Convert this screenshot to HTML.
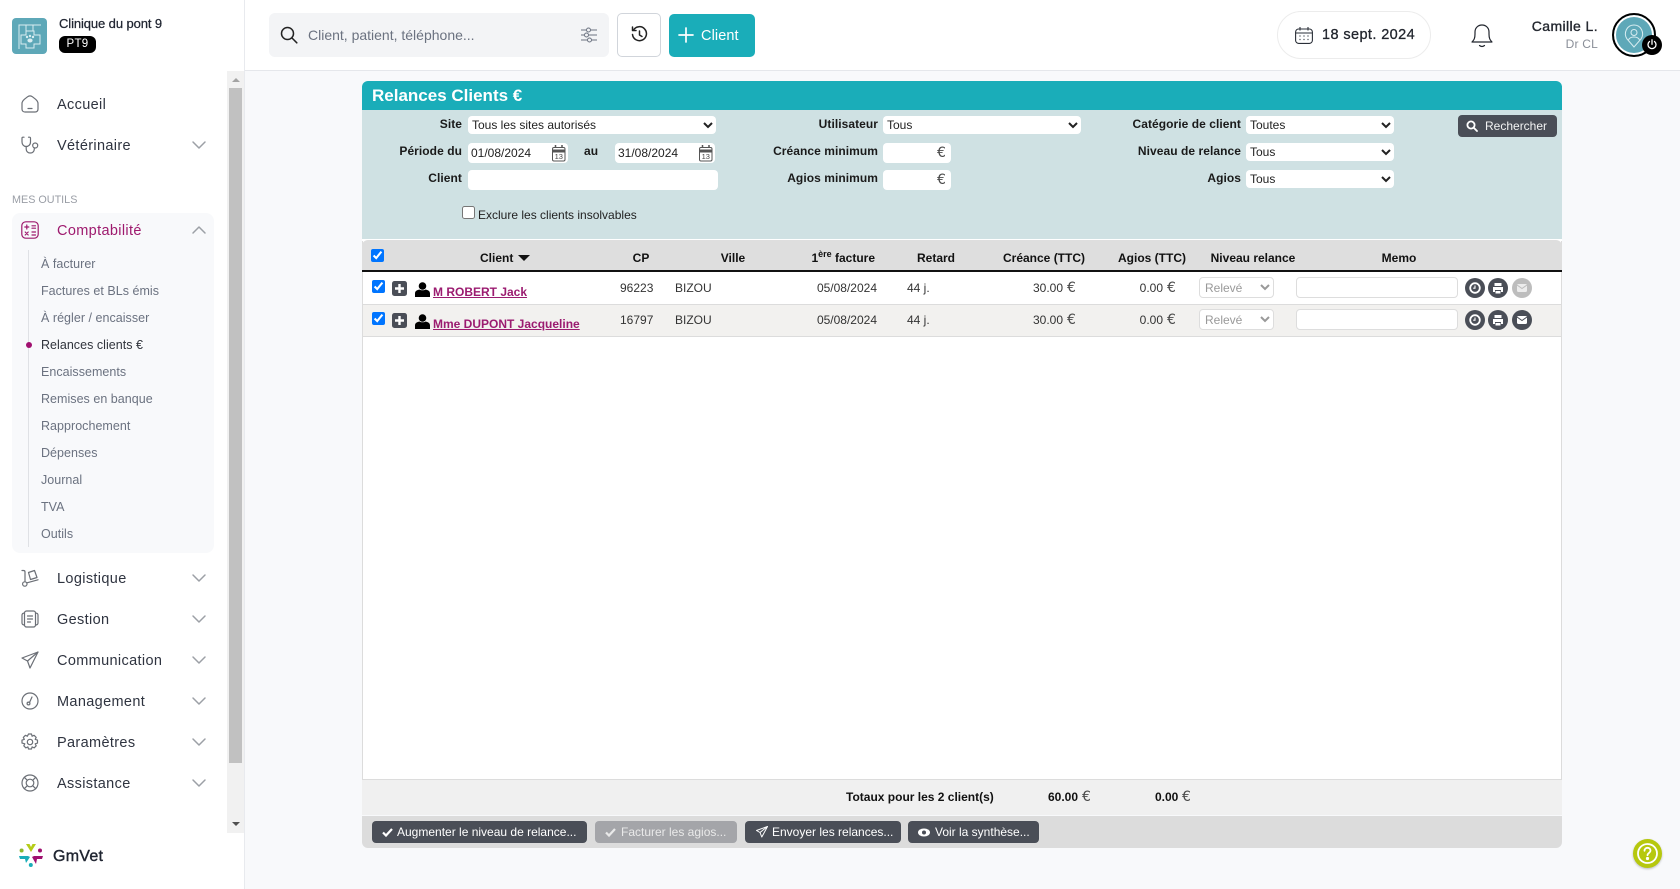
<!DOCTYPE html>
<html lang="fr"><head><meta charset="utf-8"><title>Relances Clients</title>
<style>
*{box-sizing:border-box}
html,body{margin:0;padding:0;width:1680px;height:889px;overflow:hidden;background:#f8f9fb;font-family:"Liberation Sans",Arial,sans-serif;color:#000}
.a,.t,.r,.c{position:absolute}
.t,.r,.c{white-space:nowrap;line-height:16px;font-size:12px}
.r{text-align:right;transform:translateX(-100%)}
.c{transform:translateX(-50%)}
.m{font-size:14.5px;letter-spacing:.35px;color:#2f3440;left:57px}
.s{font-size:12.5px;letter-spacing:.03px;color:#6b7280;left:41px}
.l{font-weight:bold;color:#1a1a1a;letter-spacing:.06px}
.h{font-weight:bold;color:#111}
.d{color:#333}
svg{position:absolute;display:block;overflow:visible}
.i{fill:none;stroke:#6b6f76;stroke-width:1.2;stroke-linecap:round;stroke-linejoin:round}
.cv{fill:none;stroke:#9ca0a6;stroke-width:1.5;stroke-linecap:round;stroke-linejoin:round}
select,input[type=text]{position:absolute;margin:0;border:0;background:#fff;border-radius:4px;font:12px "Liberation Sans",Arial,sans-serif;color:#222;outline:0}
select{padding:0}
input[type=text]{padding:0 3px}
input[type=checkbox]{position:absolute;margin:0;width:13px;height:13px}
.e{font-family:"DejaVu Sans",sans-serif;font-size:14px;color:#4a4a4a;font-weight:normal}
.b{position:absolute;top:821px;height:22px;background:#4a4e57;border-radius:4px;color:#fff;font-size:12px;line-height:22px;white-space:nowrap}
.ci{position:absolute;width:20px;height:20px;border-radius:50%;background:#4a4e57}
.lnk{position:absolute;left:433px;font-size:12px;line-height:14px;font-weight:bold;color:#9b1b70;text-decoration:underline;white-space:nowrap}
</style></head><body>

<!-- Sidebar -->
<div class="a" style="left:0;top:0;width:245px;height:889px;background:#fff;border-right:1px solid #e8eaee"></div>
<div class="a" style="left:12px;top:18px;width:35px;height:36px;border-radius:4px;background:#5ea8b8"></div>
<svg style="left:12px;top:18px" width="35" height="36" viewBox="0 0 35 36"><g fill="none" stroke="#d8edf1" stroke-width="1"><path d="M7 31V7h22M14 7v6M21 7v6"/><path d="M14 13h8v4h6v9h-6v4h-8v-4H9v-9h5z"/></g><g fill="#d8edf1"><circle cx="15" cy="19" r="1.2"/><circle cx="18" cy="18" r="1.2"/><circle cx="21" cy="19" r="1.2"/><ellipse cx="18" cy="22.500" rx="2.600" ry="2"/></g></svg>
<div class="t" style="left:59px;top:16px;font-size:13px;letter-spacing:-.1px;color:#1f2430;-webkit-text-stroke:.25px #1f2430">Clinique du pont 9</div>
<div class="a" style="left:59px;top:36px;width:37px;height:17px;background:#000;border-radius:6px;color:#fff;font-size:11.5px;line-height:17px;text-align:center;letter-spacing:.3px">PT9</div>

<!-- Scrollbar -->
<div class="a" style="left:227px;top:71px;width:17px;height:762px;background:#f1f1f1"></div>
<div class="a" style="left:229px;top:88px;width:13px;height:675px;background:#c1c1c1"></div>
<svg style="left:232px;top:77px" width="9" height="6"><path d="M4 1l4 4H0z" fill="#a3a3a3"/></svg>
<svg style="left:232px;top:821px" width="9" height="6"><path d="M0 1h8L4 5z" fill="#505050"/></svg>

<!-- Menu -->
<svg class="i" style="left:21px;top:95px" width="18" height="18" viewBox="0 0 18 18"><path d="M1 8.500C1 6.500 2 5.500 3.500 4.200L6.500 1.800C8 .7 10 .7 11.500 1.800L14.500 4.200C16 5.500 17 6.500 17 8.500V14C17 16 15.800 17 14 17H4C2.200 17 1 16 1 14z"/><path d="M7 13.500h4"/></svg>
<div class="t m" style="top:97px">Accueil</div>
<svg class="i" style="left:21px;top:136px" width="18" height="18" viewBox="0 0 18 18"><path d="M3 1.200H2C1.400 1.200 1 1.600 1 2.200V6C1 8.800 3 10.500 5.200 10.500S9.500 8.800 9.500 6V2.200C9.500 1.600 9 1.200 8.500 1.200H7.500"/><path d="M5.200 10.500V13C5.200 15.400 7 17 9.300 17S13.300 15.400 13.300 13V12"/><circle cx="14.200" cy="9.500" r="2.500"/></svg>
<div class="t m" style="top:138px">Vétérinaire</div>
<svg class="cv" style="left:192px;top:141px" width="14" height="8"><path d="M1 1l6 6 6-6"/></svg>
<div class="t" style="left:12px;top:192px;font-size:10.8px;color:#9a9ea6">MES OUTILS</div>

<div class="a" style="left:12px;top:213px;width:202px;height:340px;border-radius:8px;background:#f8f9fb"></div>
<svg class="i" style="left:21px;top:221px;stroke:#9e1a6e" width="18" height="18" viewBox="0 0 18 18"><rect x=".8" y=".8" width="16.400" height="16.400" rx="4"/><path d="M3.800 6h4M5.800 4v4M11 4.800h3.500M11 7.200h3.500M4.200 11l3 3M7.200 11l-3 3M11 11h3.500M11 14h3.500"/></svg>
<div class="t m" style="top:223px;color:#9e1a6e">Comptabilité</div>
<svg class="cv" style="left:192px;top:226px" width="14" height="8"><path d="M1 7l6-6 6 6"/></svg>
<div class="a" style="left:28px;top:250px;width:1px;height:297px;background:#dfe1e5"></div>
<div class="t s" style="top:256px">À facturer</div>
<div class="t s" style="top:283px">Factures et BLs émis</div>
<div class="t s" style="top:310px">À régler / encaisser</div>
<div class="a" style="left:26px;top:342px;width:6px;height:6px;border-radius:50%;background:#a0106f"></div>
<div class="t s" style="top:337px;color:#30343c">Relances clients €</div>
<div class="t s" style="top:364px">Encaissements</div>
<div class="t s" style="top:391px">Remises en banque</div>
<div class="t s" style="top:418px">Rapprochement</div>
<div class="t s" style="top:445px">Dépenses</div>
<div class="t s" style="top:472px">Journal</div>
<div class="t s" style="top:499px">TVA</div>
<div class="t s" style="top:526px">Outils</div>

<svg class="i" style="left:21px;top:569px" width="18" height="18" viewBox="0 0 18 18"><path d="M1 1.500h1.500C3.500 1.500 4 2 4 3V12"/><circle cx="3.800" cy="15" r="2.200"/><path d="M6 13.800L17 10.800"/><path d="M7.500 3.500L13.500 1.500 16 8.500 9.500 10.500z"/></svg>
<div class="t m" style="top:571px">Logistique</div>
<svg class="cv" style="left:192px;top:574px" width="14" height="8"><path d="M1 1l6 6 6-6"/></svg>
<svg class="i" style="left:21px;top:610px" width="18" height="18" viewBox="0 0 18 18"><rect x="3.500" y="1" width="11" height="16" rx="2"/><path d="M3.500 3C1.800 3 1 4 1 5V13C1 14 1.800 15 3.500 15M14.500 3C16.200 3 17 4 17 5V13C17 14 16.200 15 14.500 15M6.500 6h5M6.500 9h5M6.500 12h3"/></svg>
<div class="t m" style="top:612px">Gestion</div>
<svg class="cv" style="left:192px;top:615px" width="14" height="8"><path d="M1 1l6 6 6-6"/></svg>
<svg class="i" style="left:21px;top:651px" width="18" height="18" viewBox="0 0 18 18"><path d="M17 1L1 7l5.500 3L9 17z"/><path d="M17 1L6.500 10"/></svg>
<div class="t m" style="top:653px">Communication</div>
<svg class="cv" style="left:192px;top:656px" width="14" height="8"><path d="M1 1l6 6 6-6"/></svg>
<svg class="i" style="left:21px;top:692px" width="18" height="18" viewBox="0 0 18 18"><circle cx="9" cy="9" r="8"/><circle cx="7.500" cy="11.500" r="1.400"/><path d="M8.500 10.500L11 5"/></svg>
<div class="t m" style="top:694px">Management</div>
<svg class="cv" style="left:192px;top:697px" width="14" height="8"><path d="M1 1l6 6 6-6"/></svg>
<svg class="i" style="left:21px;top:733px" width="18" height="18" viewBox="0 0 18 18"><circle cx="9" cy="9" r="2.700"/><path d="M7.500 1h3l.6 2.200 2-.9 2.100 2.100-1 2 2.300.7v3l-2.300.7 1 2-2.100 2.100-2-1-.6 2.100h-3l-.6-2.100-2 1-2.100-2.100 1-2L1 10.100v-3l2.300-.7-1-2 2.100-2.100 2 .9z"/></svg>
<div class="t m" style="top:735px">Paramètres</div>
<svg class="cv" style="left:192px;top:738px" width="14" height="8"><path d="M1 1l6 6 6-6"/></svg>
<svg class="i" style="left:21px;top:774px" width="18" height="18" viewBox="0 0 18 18"><circle cx="9" cy="9" r="8"/><circle cx="9" cy="9" r="3.800"/><path d="M3.300 3.300l3 3M14.700 3.300l-3 3M3.300 14.700l3-3M14.700 14.700l-3-3"/></svg>
<div class="t m" style="top:776px">Assistance</div>
<svg class="cv" style="left:192px;top:779px" width="14" height="8"><path d="M1 1l6 6 6-6"/></svg>

<svg style="left:19px;top:843px" width="24" height="24" viewBox="0 0 24 24"><path d="M7 1h3.500L12 4l1.500-3H17l-5 8z" fill="#b5cc18"/><path d="M0 13h9l2 1-4 6-1-4H1z" fill="#1aadb9"/><path d="M24 13h-9l-2 1 4 7 1-5h5z" fill="#a0106f"/><circle cx="2.600" cy="7.500" r="2" fill="#8bb82f"/><circle cx="21" cy="7.500" r="2" fill="#a0106f"/><circle cx="11.800" cy="22" r="2" fill="#1aadb9"/></svg>
<div class="t" style="left:53px;top:849px;font-size:16px;color:#1f2430;letter-spacing:.25px;-webkit-text-stroke:.4px #1f2430">GmVet</div>

<!-- Header -->
<div class="a" style="left:245px;top:0;width:1435px;height:71px;background:#fff;border-bottom:1px solid #e5e7eb"></div>
<div class="a" style="left:269px;top:13px;width:340px;height:44px;border-radius:6px;background:#f3f4f6"></div>
<svg style="left:280px;top:26px" width="18" height="18" viewBox="0 0 18 18" fill="none" stroke="#222" stroke-width="1.500" stroke-linecap="round"><circle cx="7.500" cy="7.500" r="6"/><path d="M12 12l4.800 4.800"/></svg>
<div class="t" style="left:308px;top:27px;font-size:14px;color:#6b7280">Client, patient, téléphone...</div>
<svg style="left:581px;top:27px" width="16" height="16" viewBox="0 0 16 16" fill="none" stroke="#6b7280" stroke-width="1"><path d="M0 3h5M10 3h6M0 8h3M8 8h8M0 13h6M11 13h5"/><circle cx="7.500" cy="3" r="2"/><circle cx="5.500" cy="8" r="2"/><circle cx="8.500" cy="13" r="2"/></svg>
<div class="a" style="left:617px;top:13px;width:44px;height:44px;border:1px solid #d1d5db;border-radius:5px;background:#fff"></div>
<svg style="left:631px;top:26px" width="17" height="17" viewBox="0 0 17 17" fill="none" stroke="#222" stroke-width="1.500" stroke-linecap="round" stroke-linejoin="round"><path d="M2.500 4A7 7 0 1 1 1.500 8.500"/><path d="M1.500 1v3.500H5"/><path d="M8.500 5v4l2.500 1.500"/></svg>
<div class="a" style="left:669px;top:14px;width:86px;height:43px;border-radius:5px;background:#1aadb9"></div>
<svg style="left:679px;top:28px" width="14" height="14" fill="none" stroke="#fff" stroke-width="1.700" stroke-linecap="round"><path d="M7 0v14M0 7h14"/></svg>
<div class="t" style="left:701px;top:28px;font-size:14.5px;color:#fff;letter-spacing:.1px">Client</div>

<div class="a" style="left:1277px;top:11px;width:154px;height:48px;border-radius:24px;border:1px solid #ececec;background:#fff"></div>
<svg style="left:1295px;top:27px" width="18" height="17" viewBox="0 0 18 17" fill="none" stroke="#2a2f38" stroke-width="1.100"><rect x=".6" y="2" width="16.800" height="14.400" rx="3"/><path d="M.6 6h16.800M5 0v3.500M13 0v3.500"/><path d="M4.500 9h1M8.500 9h1M12.500 9h1M4.500 12.500h1M8.500 12.500h1M12.500 12.500h1" stroke-width="1.300"/></svg>
<div class="t" style="left:1322px;top:27px;font-size:14.5px;color:#22262e;letter-spacing:.4px;-webkit-text-stroke:.3px #22262e">18 sept. 2024</div>
<svg style="left:1471px;top:23px" width="22" height="25" viewBox="0 0 22 25" fill="none" stroke="#22262e" stroke-width="1.200" stroke-linecap="round" stroke-linejoin="round"><path d="M1 19C3 17 4 15.500 4 11V9C4 5 7 2 11 2S18 5 18 9V11C18 15.500 19 17 21 19z"/><path d="M8.500 22.500c1.500 1.200 3.500 1.200 5 0"/></svg>
<div class="r" style="left:1598px;top:18px;font-size:14px;letter-spacing:.4px;color:#22262e;-webkit-text-stroke:.35px #22262e">Camille L.</div>
<div class="r" style="left:1598px;top:36px;font-size:12px;color:#8a8f98;letter-spacing:.2px">Dr CL</div>
<div class="a" style="left:1612px;top:13px;width:44px;height:44px;border-radius:50%;border:2px solid #000;background:#5ea8b8;box-shadow:inset 0 0 0 2px #fff"></div>
<svg style="left:1624px;top:24px" width="20" height="24" viewBox="0 0 20 24" fill="none" stroke="#d8edf1" stroke-width="1"><path d="M10 23L3 15C-1 9 3 1 10 1S21 9 17 15z"/><circle cx="10" cy="8.500" r="3"/><path d="M4.500 16C5.500 13.500 8 13 10 13S14.500 13.500 15.500 16"/></svg>
<div class="a" style="left:1642px;top:35px;width:20px;height:20px;border-radius:50%;background:#000"></div>
<svg style="left:1647px;top:39px" width="10" height="11" viewBox="0 0 10 11" fill="none" stroke="#fff" stroke-width="1.300" stroke-linecap="round"><path d="M2.500 2.500A4 4 0 1 0 7.500 2.500M5 .8v4.500"/></svg>

<!-- Panel -->
<div class="a" style="left:362px;top:81px;width:1200px;height:29px;background:#1aadb9;border-radius:6px 6px 0 0"></div>
<div class="t" style="left:372px;top:87px;font-size:17px;line-height:18px;font-weight:bold;color:#fff">Relances Clients €</div>
<div class="a" style="left:362px;top:110px;width:1200px;height:129px;background:#cfe1e3"></div>

<div class="r l" style="left:462px;top:116px">Site</div>
<select style="left:468px;top:116px;width:248px;height:18px"><option>Tous les sites autorisés</option></select>
<div class="r l" style="left:462px;top:143px">Période du</div>
<input type="text" value="01/08/2024" style="left:468px;top:143px;width:100px;height:20px">
<svg style="left:552px;top:145px" width="14" height="17" viewBox="0 0 14 17" fill="none" stroke="#555" stroke-width="1"><rect x=".5" y="2.500" width="12.500" height="13.500" rx="1.500"/><path d="M.5 6h12.500" stroke-width="3"/><path d="M3.500 0v3M10 0v3" stroke-width="1.500"/><text x="6.800" y="14" font-size="7.500" font-family="Liberation Sans" text-anchor="middle" fill="#444" stroke="none">13</text></svg>
<div class="t l" style="left:584px;top:143px">au</div>
<input type="text" value="31/08/2024" style="left:615px;top:143px;width:100px;height:20px">
<svg style="left:699px;top:145px" width="14" height="17" viewBox="0 0 14 17" fill="none" stroke="#555" stroke-width="1"><rect x=".5" y="2.500" width="12.500" height="13.500" rx="1.500"/><path d="M.5 6h12.500" stroke-width="3"/><path d="M3.500 0v3M10 0v3" stroke-width="1.500"/><text x="6.800" y="14" font-size="7.500" font-family="Liberation Sans" text-anchor="middle" fill="#444" stroke="none">13</text></svg>
<div class="r l" style="left:462px;top:170px">Client</div>
<input type="text" style="left:468px;top:170px;width:250px;height:20px">
<input type="checkbox" style="left:462px;top:206px">
<div class="t" style="left:478px;top:207px;color:#222">Exclure les clients insolvables</div>

<div class="r l" style="left:878px;top:116px">Utilisateur</div>
<select style="left:883px;top:116px;width:198px;height:18px"><option>Tous</option></select>
<div class="r l" style="left:878px;top:143px">Créance minimum</div>
<input type="text" style="left:883px;top:143px;width:68px;height:20px">
<div class="t e" style="left:937px;top:145px">€</div>
<div class="r l" style="left:878px;top:170px">Agios minimum</div>
<input type="text" style="left:883px;top:170px;width:68px;height:20px">
<div class="t e" style="left:937px;top:172px">€</div>

<div class="r l" style="left:1241px;top:116px">Catégorie de client</div>
<select style="left:1246px;top:116px;width:148px;height:18px"><option>Toutes</option></select>
<div class="r l" style="left:1241px;top:143px">Niveau de relance</div>
<select style="left:1246px;top:143px;width:148px;height:18px"><option>Tous</option></select>
<div class="r l" style="left:1241px;top:170px">Agios</div>
<select style="left:1246px;top:170px;width:148px;height:18px"><option>Tous</option></select>

<div class="a" style="left:1458px;top:115px;width:99px;height:22px;background:#4a4e57;border-radius:4px"></div>
<svg style="left:1466px;top:120px" width="12" height="12" viewBox="0 0 12 12" fill="none" stroke="#fff" stroke-width="1.800" stroke-linecap="round"><circle cx="5" cy="5" r="3.600"/><path d="M8 8l3 3"/></svg>
<div class="t" style="left:1485px;top:118px;color:#f2f2f2">Rechercher</div>

<!-- Table -->
<div class="a" style="left:362px;top:240px;width:1200px;height:540px;background:#fff;border:1px solid #dcdcdc;border-top:0"></div>
<div class="a" style="left:362px;top:239px;width:1200px;height:2px;background:#fff"></div>
<div class="a" style="left:362px;top:240px;width:1200px;height:32px;background:#dedede;border-bottom:2px solid #111;border-radius:6px 6px 0 0"></div>
<input type="checkbox" checked style="left:371px;top:249px">
<div class="t h" style="left:480px;top:250px">Client</div>
<svg style="left:518px;top:255px" width="12" height="6"><path d="M0 0h12L6 6z" fill="#111"/></svg>
<div class="c h" style="left:641px;top:250px">CP</div>
<div class="c h" style="left:733px;top:250px">Ville</div>
<div class="r h" style="left:875px;top:250px">1<sup style="font-size:9px;line-height:0">ère</sup> facture</div>
<div class="c h" style="left:936px;top:250px">Retard</div>
<div class="c h" style="left:1044px;top:250px">Créance (TTC)</div>
<div class="c h" style="left:1152px;top:250px">Agios (TTC)</div>
<div class="c h" style="left:1253px;top:250px">Niveau relance</div>
<div class="c h" style="left:1399px;top:250px">Memo</div>

<!-- Row 1 -->
<div class="a" style="left:363px;top:304px;width:1198px;height:1px;background:#dcdcdc"></div>
<input type="checkbox" checked style="left:372px;top:280px">
<svg style="left:392px;top:281px" width="15" height="15" viewBox="0 0 15 15"><rect width="15" height="15" rx="2.500" fill="#4a4e57"/><path d="M7.500 3v9M3 7.500h9" stroke="#fff" stroke-width="2.400"/></svg>
<svg style="left:415px;top:282px" width="15" height="15" viewBox="0 0 15 15" fill="#000"><circle cx="7.500" cy="4" r="3.800"/><path d="M0 15V11.500C0 9 2 8 4.500 7.500c1 1 5 1 6 0C13 8 15 9 15 11.500V15z"/></svg>
<div class="lnk" style="top:285px">M ROBERT Jack</div>
<div class="t d" style="left:620px;top:280px">96223</div>
<div class="t d" style="left:675px;top:280px">BIZOU</div>
<div class="r d" style="left:877px;top:280px">05/08/2024</div>
<div class="t d" style="left:907px;top:280px">44 j.</div>
<div class="r d" style="left:1063px;top:280px">30.00</div>
<div class="t e" style="left:1067px;top:280px">€</div>
<div class="r d" style="left:1163px;top:280px">0.00</div>
<div class="t e" style="left:1167px;top:280px">€</div>
<select disabled style="left:1199px;top:277px;width:75px;height:21px;border:1px solid #ddd;color:#999;padding-left:1px;opacity:1"><option>Relevé</option></select>
<input type="text" style="left:1296px;top:277px;width:162px;height:21px;border:1px solid #ddd">
<div class="ci" style="left:1465px;top:278px"></div>
<svg style="left:1465px;top:278px" width="20" height="20" fill="none" stroke="#fff" stroke-width="1.800"><circle cx="10" cy="10" r="4.800"/><path d="M10 7.500v2.700H8.200" stroke-width="1.100"/></svg>
<div class="ci" style="left:1488px;top:278px"></div>
<svg style="left:1488px;top:278px" width="20" height="20"><path d="M6.500 5h7v3h-7z M5 9h10v5h-2v-2H7v2H5z M7.500 13h5v2.500h-5z" fill="#fff"/></svg>
<div class="ci" style="left:1512px;top:278px;background:#bdbdbd"></div>
<svg style="left:1512px;top:278px" width="20" height="20"><rect x="5" y="6" width="10" height="8" rx="1.500" fill="#ececec"/><path d="M5 7l5 3.500L15 7" fill="none" stroke="#bdbdbd" stroke-width="1"/></svg>

<!-- Row 2 -->
<div class="a" style="left:363px;top:305px;width:1198px;height:31px;background:#f2f1ef"></div>
<div class="a" style="left:363px;top:336px;width:1198px;height:1px;background:#dcdcdc"></div>
<input type="checkbox" checked style="left:372px;top:312px">
<svg style="left:392px;top:313px" width="15" height="15" viewBox="0 0 15 15"><rect width="15" height="15" rx="2.500" fill="#4a4e57"/><path d="M7.500 3v9M3 7.500h9" stroke="#fff" stroke-width="2.400"/></svg>
<svg style="left:415px;top:314px" width="15" height="15" viewBox="0 0 15 15" fill="#000"><circle cx="7.500" cy="4" r="3.800"/><path d="M0 15V11.500C0 9 2 8 4.500 7.500c1 1 5 1 6 0C13 8 15 9 15 11.500V15z"/></svg>
<div class="lnk" style="top:317px">Mme DUPONT Jacqueline</div>
<div class="t d" style="left:620px;top:312px">16797</div>
<div class="t d" style="left:675px;top:312px">BIZOU</div>
<div class="r d" style="left:877px;top:312px">05/08/2024</div>
<div class="t d" style="left:907px;top:312px">44 j.</div>
<div class="r d" style="left:1063px;top:312px">30.00</div>
<div class="t e" style="left:1067px;top:312px">€</div>
<div class="r d" style="left:1163px;top:312px">0.00</div>
<div class="t e" style="left:1167px;top:312px">€</div>
<select disabled style="left:1199px;top:309px;width:75px;height:21px;border:1px solid #ddd;color:#999;padding-left:1px;opacity:1"><option>Relevé</option></select>
<input type="text" style="left:1296px;top:309px;width:162px;height:21px;border:1px solid #ddd">
<div class="ci" style="left:1465px;top:310px"></div>
<svg style="left:1465px;top:310px" width="20" height="20" fill="none" stroke="#fff" stroke-width="1.800"><circle cx="10" cy="10" r="4.800"/><path d="M10 7.500v2.700H8.200" stroke-width="1.100"/></svg>
<div class="ci" style="left:1488px;top:310px"></div>
<svg style="left:1488px;top:310px" width="20" height="20"><path d="M6.500 5h7v3h-7z M5 9h10v5h-2v-2H7v2H5z M7.500 13h5v2.500h-5z" fill="#fff"/></svg>
<div class="ci" style="left:1512px;top:310px"></div>
<svg style="left:1512px;top:310px" width="20" height="20"><rect x="5" y="6" width="10" height="8" rx="1.500" fill="#fff"/><path d="M5 7l5 3.500L15 7" fill="none" stroke="#4a4e57" stroke-width="1"/></svg>

<!-- Totals -->
<div class="a" style="left:362px;top:780px;width:1200px;height:35px;background:#f0f0f0"></div>
<div class="t h" style="left:846px;top:789px">Totaux pour les 2 client(s)</div>
<div class="t h" style="left:1048px;top:789px">60.00</div><div class="t e" style="left:1082px;top:789px">€</div>
<div class="t h" style="left:1155px;top:789px">0.00</div><div class="t e" style="left:1182px;top:789px">€</div>

<!-- Actions -->
<div class="a" style="left:362px;top:816px;width:1200px;height:32px;background:#dcdcdc;border-radius:0 0 6px 6px"></div>
<div class="b" style="left:372px;width:215px;padding-left:25px">Augmenter le niveau de relance...</div>
<svg style="left:382px;top:828px" width="11" height="9" fill="none" stroke="#fff" stroke-width="2.200"><path d="M1 4.500l3 3L10 1"/></svg>
<div class="b" style="left:595px;width:142px;padding-left:26px;background:#a4a5a9;color:#e9e9e9">Facturer les agios...</div>
<svg style="left:605px;top:828px" width="11" height="9" fill="none" stroke="#e9e9e9" stroke-width="2.200"><path d="M1 4.500l3 3L10 1"/></svg>
<div class="b" style="left:745px;width:156px;padding-left:27px">Envoyer les relances...</div>
<svg style="left:756px;top:826px" width="12" height="12" viewBox="0 0 12 12" fill="none" stroke="#fff" stroke-width="1" stroke-linejoin="round"><path d="M11.500 .5L.5 4.500l3.500 2L5.800 11z"/><path d="M11.500 .5L4 6.500"/></svg>
<div class="b" style="left:908px;width:131px;padding-left:27px">Voir la synthèse...</div>
<svg style="left:918px;top:828px" width="12" height="9" viewBox="0 0 12 9"><ellipse cx="6" cy="4.500" rx="6" ry="4" fill="#fff"/><circle cx="6" cy="4.500" r="2" fill="#4a4e57"/></svg>

<!-- Help -->
<div class="a" style="left:1633px;top:839px;width:29px;height:29px;border-radius:50%;background:#b6c80e;box-shadow:0 1px 2px rgba(0,0,0,.25)"></div>
<svg style="left:1633px;top:839px" width="29" height="29" viewBox="0 0 29 29" fill="none" stroke="#fff" stroke-width="1.800" stroke-linecap="round"><circle cx="14.500" cy="14.500" r="9.500"/><path d="M11.500 11.800c0-1.800 1.400-3 3-3s3 1.200 3 2.800c0 2.200-3 2.400-3 4.600"/><circle cx="14.500" cy="19.500" r=".7" fill="#fff"/></svg>
</body></html>
